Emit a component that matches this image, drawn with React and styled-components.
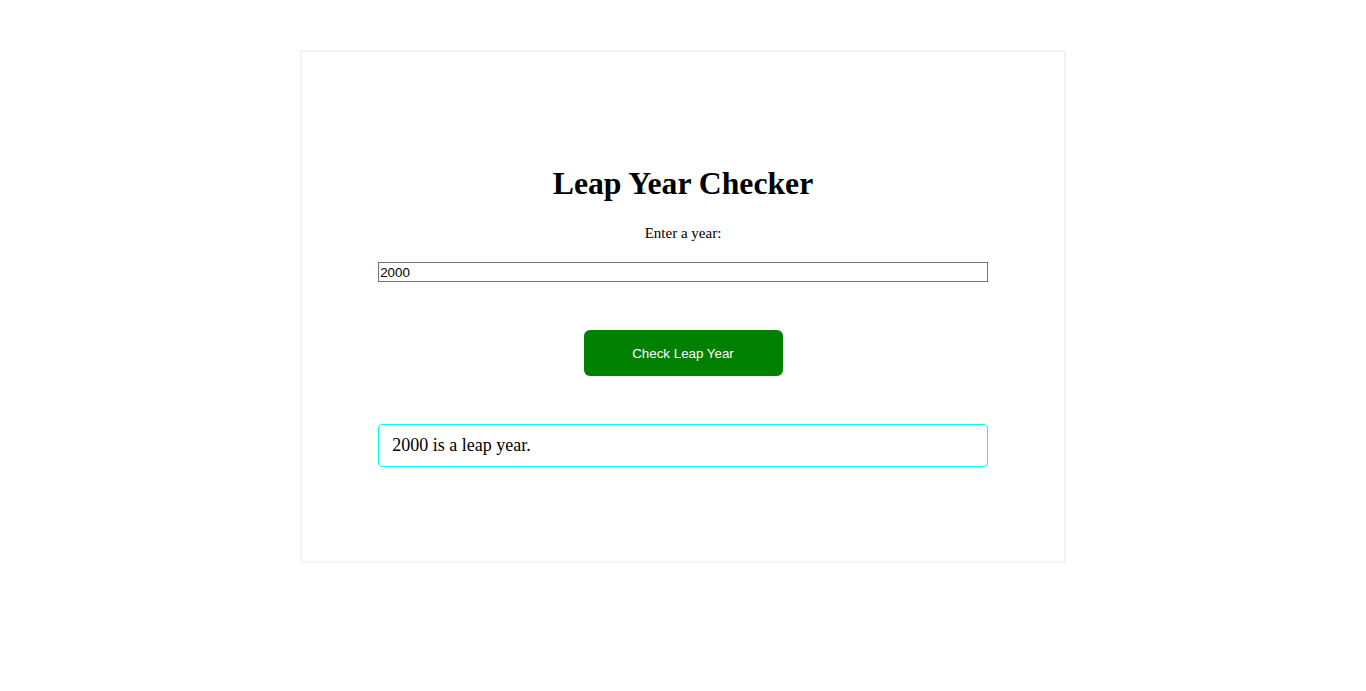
import styled, { createGlobalStyle } from "styled-components";
import { useState } from "react";

const GlobalStyle = createGlobalStyle`
  body {
    margin: 0;
    background: #ffffff;
    font-family: "Liberation Serif", "Times New Roman", serif;
    color: #000000;
  }
`;

const Page = styled.div`
  padding-top: 50px;
`;

const Card = styled.div`
  box-sizing: border-box;
  width: 766px;
  height: 513px;
  margin: 0 auto;
  border: 2px solid #f3f3f3;
  padding-top: 114px;
  display: flex;
  flex-direction: column;
  align-items: center;
`;

const Title = styled.h1`
  margin: 0;
  font-size: 31.7px;
  font-weight: bold;
`;

const Label = styled.label`
  margin-top: 23px;
  font-size: 15px;
  line-height: 16px;
`;

const YearInput = styled.input`
  box-sizing: border-box;
  margin-top: 21px;
  width: 80%;
  height: 20px;
  padding: 0 1px;
  border: 1px solid #767676;
  font-family: "Liberation Sans", Arial, sans-serif;
  font-size: 13.33px;
  color: #000;
  outline: none;
`;

const CheckButton = styled.button`
  margin-top: 48px;
  width: 199px;
  height: 46px;
  background: #008000;
  color: #ffffff;
  border: none;
  border-radius: 6px;
  font-family: "Liberation Sans", Arial, sans-serif;
  font-size: 13.33px;
  cursor: pointer;
`;

const Result = styled.div`
  box-sizing: border-box;
  margin-top: 48px;
  width: 80%;
  height: 43px;
  padding: 0 13px;
  display: flex;
  align-items: center;
  border: 1px solid #00ffff;
  border-radius: 4px;
  font-size: 18px;
`;

function isLeap(y) {
  return (y % 4 === 0 && y % 100 !== 0) || y % 400 === 0;
}

export default function App() {
  const [year, setYear] = useState("2000");
  const [result, setResult] = useState("2000 is a leap year.");

  const check = () => {
    const y = parseInt(year, 10);
    if (isNaN(y)) {
      setResult("Please enter a valid year.");
      return;
    }
    setResult(`${y} is ${isLeap(y) ? "a leap year" : "not a leap year"}.`);
  };

  return (
    <Page>
      <GlobalStyle />
      <Card>
        <Title>Leap Year Checker</Title>
        <Label htmlFor="year">Enter a year:</Label>
        <YearInput
          id="year"
          type="text"
          value={year}
          onChange={(e) => setYear(e.target.value)}
        />
        <CheckButton onClick={check}>Check Leap Year</CheckButton>
        <Result>{result}</Result>
      </Card>
    </Page>
  );
}
